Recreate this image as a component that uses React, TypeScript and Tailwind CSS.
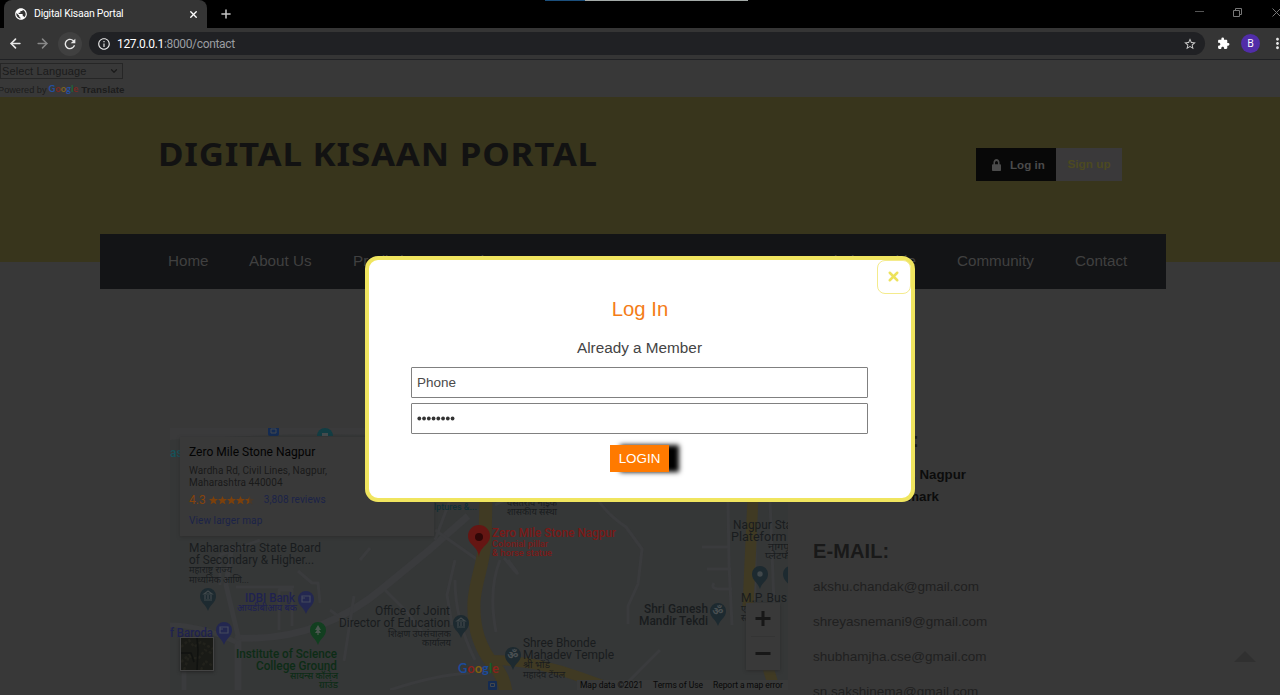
import React from 'react';
import { ArrowLeft, ArrowRight, Plus, X, ChevronDown } from 'lucide-react';
import { MdExtension, MdInfoOutline, MdMoreVert, MdRefresh, MdStarBorder, MdPublic } from 'react-icons/md';
import { FaLock } from 'react-icons/fa';

function BrowserChrome() {
  return (
    <header className="shrink-0 font-['Noto_Sans',sans-serif]">
      <div className="flex h-7 bg-black">
        <div className="ml-1 flex w-[203px] items-center rounded-t-lg bg-[#353535] pl-[10px] pr-2 text-white">
          <MdPublic className="size-[14px] shrink-0" />
          <span className="ml-[6px] flex-1 whitespace-nowrap font-['Roboto',sans-serif] text-[10.5px] tracking-[-0.25px]">Digital Kisaan Portal</span>
          <X className="size-[11px]" strokeWidth={3} />
        </div>
        <Plus className="ml-[12px] mt-[7px] size-[14px] text-[#c4c4c4]" strokeWidth={2.6} />
        <div className="ml-[312px] flex h-px w-[203px]">
          <div className="w-[40px] bg-[#1b4f7c]" />
          <div className="flex-1 bg-[#a4aaa8]" />
        </div>
        <div className="ml-auto flex items-start text-[#777]">
          <div className="mt-[11px] h-px w-[9px] bg-[#555]" />
          <svg className="ml-[29px] mt-2 size-[9px]" viewBox="0 0 9 9" fill="none" stroke="currentColor">
            <path d="M.5 2.5h6v6h-6zM2.5 2.5v-2h6v6h-2" />
          </svg>
          <svg className="ml-[30px] mt-2 h-[9px] w-[8px]" viewBox="0 0 8 9" fill="none" stroke="currentColor">
            <path d="M.5.5l8 8M8.5.5l-8 8" />
          </svg>
        </div>
      </div>
      <div className="flex h-8 items-center overflow-hidden border-b border-[#202124] bg-[#353535] text-[#e8e8e8]">
        <ArrowLeft className="ml-2 size-[15px] shrink-0" strokeWidth={2.6} />
        <ArrowRight className="ml-3 size-[15px] shrink-0 text-[#888]" strokeWidth={2.4} />
        <div className="ml-2 flex size-6 shrink-0 items-center justify-center rounded-full bg-[#404040]">
          <MdRefresh className="size-[16px]" />
        </div>
        <div className="ml-[7px] flex h-[23px] w-[1116px] shrink-0 items-center rounded-full bg-[#202124] pl-2 pr-[8px]">
          <MdInfoOutline className="size-[14px]" />
          <span className="ml-[6px] font-['Roboto',sans-serif] text-[12px] tracking-[-0.34px] text-white">127.0.0.1<span className="text-[#9a9da1]">:8000/contact</span></span>
          <MdStarBorder className="ml-auto size-[14px] text-[#ccc]" />
        </div>
        <MdExtension className="ml-[12px] size-[13px] shrink-0 text-white" />
        <div className="ml-[11px] flex size-[19px] shrink-0 items-center justify-center rounded-full bg-[#512da8] text-[10px] text-white">B</div>
        <MdMoreVert className="ml-[9px] size-[17px] shrink-0" />
      </div>
    </header>
  );
}

function TranslateBar() {
  return (
    <div className="h-[37px] shrink-0 bg-[#383838] pt-[3px]">
      <div className="flex h-4 w-[123px] items-center justify-between border border-[#262626] pl-[1px] pr-[3px] text-[11px] tracking-[0.12px] text-[#1b1b1b]">
        Select Language
        <ChevronDown className="size-[10px]" strokeWidth={3} />
      </div>
      <div className="ml-[-2px] mt-[4px] flex items-center text-[9.2px] leading-[14px] text-[#1c1c1c]">
        Powered by
        <span className="ml-[2px] mt-[-2px] font-['Lato',sans-serif] text-[9.4px] font-bold">
          <span className="text-[#2450a0]">G</span><span className="text-[#7c2822]">o</span><span className="text-[#7d6220]">o</span><span className="text-[#2450a0]">g</span><span className="text-[#206838]">l</span><span className="text-[#7c2822]">e</span>
        </span>
        <b className="ml-[3px] text-[9.8px]">Translate</b>
      </div>
    </div>
  );
}

const nav = [
  ['Home', 'w-[81px]'],
  ['About Us', 'w-[104px]'],
  ['Prediction', 'w-[110px]'],
  ['Schemes', 'w-[328px]'],
  ['Knowledge Guide', 'w-[166px]'],
  ['Community', 'w-[118px]'],
  ['Contact', 'w-[54px]'],
];

function SiteHeader() {
  return (
    <div className="h-[193px] shrink-0 bg-[linear-gradient(#38351c_165px,#383838_165px)]">
      <div className="flex h-[137px]">
        <h1 className="ml-[158px] mt-[35px] w-[440px] origin-left scale-x-[1.09] whitespace-nowrap font-['Noto_Sans',sans-serif] text-[32px] font-bold leading-[44px] tracking-[0.72px] text-[#121212]">DIGITAL KISAAN PORTAL</h1>
        <div className="ml-[378px] mt-[51px] flex h-[33px] text-[11.6px] font-bold">
          <div className="flex w-[80px] items-center bg-[#080808] pl-[16px] text-[#4b4b4b]">
            <FaLock className="h-[12px] w-[9px]" preserveAspectRatio="none" />
            <span className="ml-[9px] whitespace-nowrap">Log in</span>
          </div>
          <div className="flex w-[66px] items-center justify-center bg-[#3a393a] text-[11.8px] text-[#4c4921]">Sign up</div>
        </div>
      </div>
      <nav className="ml-[100px] flex h-[55px] w-[1066px] items-center overflow-hidden bg-[#131416] pl-[68px] text-[15.2px] text-[#404040]">
        {nav.map(([label, width]) => (
          <span key={label} className={width + ' shrink-0 whitespace-nowrap ' + (label === 'Knowledge Guide' ? 'pr-[41px] text-right' : '')}>{label}</span>
        ))}
      </nav>
    </div>
  );
}

type LabelProps = { x: number; y: number; w?: number; size?: number; color?: string; weight?: number; children: string };
function Label({ x, y, w, size = 12, color = '#191c1e', weight = 400, children }: LabelProps) {
  return (
    <text x={x} y={y} fontSize={size} fill={color} fontWeight={color === '#191c1e' ? weight : 500} textLength={w} lengthAdjust="spacingAndGlyphs">{children}</text>
  );
}

function Pin({ x, y, color = '#1d2a30', kind = 'dot' }: { x: number; y: number; color?: string; kind?: string }) {
  return (
    <g transform={`translate(${x} ${y})`}>
      <path d="M0 15C-2 8-8 7-8 0a8 8 0 0 1 16 0c0 7-6 8-8 15z" fill={color} />
      {kind === 'dot' && <circle r="2.7" fill="#41484b" />}
      {kind === 'bank' && <path d="M-4-2L0-5l4 3zM-3-1v4M0-1v4M3-1v4M-4 4h8" fill="none" stroke="#41484b" strokeWidth="1.2" />}
      {kind === 'card' && <path d="M-4-3h8v6h-8zM-4-1h3" fill="none" stroke="#454a5d" strokeWidth="1.2" />}
      {kind === 'tree' && <path d="M0-5l-3 5h2l-2 3h2.4v2h1.2V3H3L1 0h2z" fill="#4b5750" />}
      {kind === 'om' && <text y="4" fontSize="11" textAnchor="middle" fontWeight="700" fill="#4a5052">ॐ</text>}
    </g>
  );
}

function MapDrawing() {
  return (
    <svg className="size-full font-['Roboto','Noto_Sans',sans-serif]" viewBox="170 428 618 262">
      <rect x="170" y="428" width="618" height="262" fill="#353737" />
      <path d="M170 428h200v7q-100-2-200 5z" fill="#3a3a3b" />
      <g fill="none" stroke="#3a3b3d" strokeLinejoin="round">
        <path d="M238 690v-52q45 2 83-13 35-14 62-37l45-37 40-35" strokeWidth="7" />
        <path d="M170 625q30 0 66 17M184 690v-20M239 640l-13-55 6-40" strokeWidth="5" />
        <path d="M236 587h58M279 630v-40h13v36M298 571l14 12h6l2 20M354 596l-10 65M385 590l22 22 15 20M390 690q45-15 80-17M330 610l20 15M450 500l-15 40M435 530l50 35M455 560l-8 35 5 30M360 560l10-12M220 585v-30l40-15M475 660q-20-40-20-80" strokeWidth="3" />
        <path d="M500 560q-12 30-4 72M508 560q15 20 6 10l-10-12M598 500q10 15 28 27l16 22-4 35-10 22v18M728 500l1 65 3 60M702 547h28M707 569h24M714 583q-4 6 6 6h12M755 500v100M770 500l5 130M495 505l18-9M620 690l40-40" strokeWidth="3" />
      </g>
      <g fill="none" stroke="#403a23">
        <path d="M486 497l-1 45c-2 25-10 40-11 60-1 25 5 45 19 62q11 12 13 28" strokeWidth="13" />
        <path d="M490 660q45 0 90 17l45 16" strokeWidth="10" />
        <path d="M753 497l-5 110M768 668l7 22" strokeWidth="11" />
      </g>
      <rect x="268" y="424" width="11" height="12" rx="2" fill="#142b52" />
      <path d="M271 429h5v4h-5z" fill="none" stroke="#43484e" />
      <path d="M317 436a8 8 0 0 1 16 0z" fill="#123d43" />
      <path d="M322 436v-3h6v3z" fill="#454b4d" />
      <Label x={170} y={457} color="#15525a">as</Label>
      <Label x={189} y={552} w={132}>Maharashtra State Board</Label>
      <Label x={189} y={564} w={125}>of Secondary &amp; Higher...</Label>
      <Label x={189} y={573} w={43} size={9}>महाराष्ट्र राज्य</Label>
      <Label x={189} y={583} w={60} size={9}>माध्यमिक आणि...</Label>
      <Label x={245} y={602} w={50} color="#1f2250">IDBI Bank</Label>
      <Label x={237} y={611} w={60} size={9} color="#1f2250">आयडीबीआय बँक</Label>
      <Label x={170} y={637} w={43} color="#1f2250">f Baroda</Label>
      <Label x={236} y={658} w={101} color="#0d2c16">Institute of Science</Label>
      <Label x={256} y={670} w={81} color="#0d2c16">College Ground</Label>
      <Label x={290} y={679} w={48} size={9} color="#0d2c16">सायन्स कॉलेज</Label>
      <Label x={319} y={688} w={19} size={9} color="#0d2c16">ग्राउंड</Label>
      <Label x={375} y={615} w={75}>Office of Joint</Label>
      <Label x={339} y={627} w={111}>Director of Education</Label>
      <Label x={388} y={637} w={63} size={9}>शिक्षण उपसंचालक</Label>
      <Label x={422} y={646} w={29} size={9}>कार्यालय</Label>
      <Label x={434} y={510} w={43} size={9} color="#0f3035">lptures &amp;...</Label>
      <Label x={507} y={506} w={50} size={9}>वसंतराव नाईक</Label>
      <Label x={507} y={515} w={50} size={9}>शासकीय संस्था</Label>
      <Label x={492} y={537} w={124} color="#7a1a17">Zero Mile Stone Nagpur</Label>
      <Label x={492} y={547} w={56} size={9.5} color="#7a1a17">Colonial pillar</Label>
      <Label x={492} y={556} w={60} size={9.5} color="#7a1a17">&amp; horse statue</Label>
      <Label x={733} y={529} w={59}>Nagpur Sta</Label>
      <Label x={731} y={541} w={62}>Plateform I</Label>
      <Label x={768} y={550} w={26} size={9}>नागपूर</Label>
      <Label x={765} y={559} w={34} size={9}>प्लेटफॉर्म</Label>
      <Label x={741} y={602} w={46}>M.P. Bus</Label>
      <Label x={741} y={612} size={9}>ए</Label>
      <Label x={741} y={621} size={9}>स्टेशन</Label>
      <Label x={644} y={613} w={64} weight={500}>Shri Ganesh</Label>
      <Label x={639} y={625} w={69} weight={500}>Mandir Tekdi</Label>
      <Label x={523} y={647} w={73}>Shree Bhonde</Label>
      <Label x={523} y={659} w={91}>Mahadev Temple</Label>
      <Label x={523} y={668} w={27} size={9}>श्री भोंडे</Label>
      <Label x={523} y={678} w={42} size={9}>महादेव टेंपल</Label>
      <Pin x={208} y={596} kind="bank" />
      <Pin x={306} y={599} color="#232750" kind="card" />
      <Pin x={224} y={630} color="#232750" kind="card" />
      <Pin x={318} y={630} color="#123f20" kind="tree" />
      <Pin x={461} y={623} kind="bank" />
      <Pin x={718} y={611} kind="om" />
      <Pin x={513} y={655} kind="om" />
      <Pin x={760} y={574} />
      <Pin x={791} y={574} />
      <path d="M479 557c-1-11-11-12-11-21a11 11 0 0 1 22 0c0 9-10 10-11 21z" fill="#651613" />
      <circle cx="479" cy="537" r="4" fill="#300707" />
      <rect x="488" y="681" width="9" height="9" rx="1" fill="#142b52" />
      <path d="M490.500 683.500h4v3h-4z" fill="none" stroke="#43484e" />
      <text x="458" y="673" fontSize="13" fontWeight="700" textLength="41" lengthAdjust="spacingAndGlyphs" fontFamily="Lato">
        <tspan fill="#1c4a9a">G</tspan><tspan fill="#8a221c">o</tspan><tspan fill="#806010">o</tspan><tspan fill="#1c4a9a">g</tspan><tspan fill="#16602a">l</tspan><tspan fill="#8a221c">e</tspan>
      </text>
      <rect x="577" y="680" width="211" height="10" fill="#393a3a" />
      <g fontSize="8.500" fill="#080808">
        <text x="580" y="688" textLength="63">Map data ©2021</text>
        <text x="653" y="688" textLength="50">Terms of Use</text>
        <text x="713" y="688" textLength="70">Report a map error</text>
      </g>
    </svg>
  );
}

function MapPanel() {
  return (
    <div className="relative h-[262px] w-[618px] shrink-0 overflow-hidden font-['Roboto',sans-serif]">
      <MapDrawing />
      <div className="absolute left-[10px] top-[9px] h-[99px] w-[254px] bg-[#393939] pl-[9px] pt-[8px] shadow-[0_1px_3px_#2e2e2e]">
        <div className="whitespace-nowrap text-[12px] leading-[14px] tracking-[0.02px] text-[#030303]">Zero Mile Stone Nagpur</div>
        <div className="mt-[6px] text-[10px] leading-3 tracking-[0.06px] text-[#1a1a1a]">Wardha Rd, Civil Lines, Nagpur,<br />Maharashtra 440004</div>
        <div className="mt-[4px] flex items-center leading-[14px]">
          <span className="text-[12px] text-[#85430c]">4.3</span>
          <svg className="ml-[3px] h-[9px] w-[46px]" viewBox="0 0 46 9" fill="#7b400c">
            {[0, 9, 18, 27].map((x) => <path key={x} d="M4.500 0l1.300 3h3.200L6.500 5.200l1 3.300-3-2-3 2 1-3.300L0 3h3.200z" transform={`translate(${x})`} />)}
            <path d="M40.500 0v6.500l-3 2 1-3.300L36 3h3.200z" />
            <path d="M40.500 0l1.300 3H45l-2.500 2.200 1 3.300-3-2z" fill="#4a3827" />
          </svg>
          <span className="ml-[9px] text-[10px] tracking-[0.1px] text-[#1b2348]">3,808 reviews</span>
        </div>
        <div className="mt-[7px] text-[10px] leading-[14px] tracking-[0.1px] text-[#1b2348]">View larger map</div>
      </div>
      <div className="absolute left-[10px] top-[209px] h-[34px] w-[34px] border border-[#444] bg-[#191a16] shadow-[0_1px_3px_#222]">
        <svg className="size-full" viewBox="0 0 32 32">
          <path d="M0 9l8-7 5 7 7-5 12 7M3 32l5-14 9 3 7-9 8 4M0 24l9-8M20 32l4-9 8 5" fill="none" stroke="#21211b" strokeWidth="2.500" strokeDasharray="3 2" />
          <path d="M16 0l1 12-1 20M0 15h10l3 9" fill="none" stroke="#101210" strokeWidth="1.500" />
        </svg>
      </div>
      <div className="absolute left-[576px] top-[175px] flex h-[67px] w-[34px] flex-col items-center bg-[#393939] shadow-[0_1px_3px_#2c2c2c]">
        <svg className="size-full" viewBox="0 0 34 67" fill="#171717">
          <path d="M9.500 14h6V8h3v6h6v3h-6v6h-3v-6h-6zM9.500 49h15v3h-15z" />
          <path d="M5 33h24v1H5z" fill="#343434" />
        </svg>
      </div>
    </div>
  );
}

function ContactDetails() {
  return (
    <div className="ml-[25px] w-[300px] text-[#191919]">
      <h2 className="w-[106px] text-right text-[20px] font-bold leading-6">ADDRESS:</h2>
      <p className="mt-[12px] w-[152px] whitespace-nowrap text-right text-[13.3px] font-bold leading-[22px] text-[#0c0c0c]">Zero Mile Stone, Nagpur</p>
      <p className="w-[126px] whitespace-nowrap text-right text-[13.3px] font-bold leading-[22px] text-[#0c0c0c]">Landmark</p>
      <h2 className="mt-[31px] text-[20px] font-bold leading-6 tracking-[0.1px]">E-MAIL:</h2>
      <div className="mt-[6px] text-[13.5px] leading-[35px] text-[#202020]">
        <p>akshu.chandak@gmail.com</p>
        <p>shreyasnemani9@gmail.com</p>
        <p>shubhamjha.cse@gmail.com</p>
        <p>sn.sakshinema@gmail.com</p>
      </div>
    </div>
  );
}

function LoginDialog() {
  return (
    <section className="absolute left-[365px] top-[256px] flex h-[246px] w-[550px] flex-col items-center rounded-[13px] border-4 border-[#f0e55f] bg-white pr-[2px]">
      <button className="absolute right-0 top-0 flex h-[34px] w-[34px] items-center justify-center rounded-lg border border-[#f4eb8c] pb-[2px] pr-[2px] text-[#ede25c]">
        <X className="size-[15px]" strokeWidth={4} />
      </button>
      <h2 className="mt-[37px] pl-[2px] text-[20.3px] leading-6 text-[#f47c16]">Log In</h2>
      <p className="mt-[17px] pl-[1px] text-[15.3px] leading-5 text-[#444]">Already a Member</p>
      <div className="mt-[9px] flex h-[31px] w-[457px] items-center rounded-[1px] border border-[#808080] pl-[5.5px] pt-px text-[13.5px] text-[#4a4a4a]">Phone</div>
      <div className="mt-[5px] flex h-[31px] w-[457px] items-center rounded-[1px] border border-[#808080] pl-[5px] text-[#333]">
        <svg className="h-[5px] w-[40px]" viewBox="0 0 40 5" fill="currentColor">
          {Array.from({ length: 8 }, (_, i) => <circle key={i} cx={2.3 + i * 4.75} cy="2.500" r="1.900" />)}
        </svg>
      </div>
      <button className="mt-[11px] h-[27px] w-[59px] bg-[#ff7a00] pl-px pt-px text-[13.4px] text-white shadow-[10px_0_5px_#000]">LOGIN</button>
    </section>
  );
}

export default function App() {
  return (
    <div className="relative flex h-[695px] w-[1280px] flex-col overflow-hidden bg-[#383838] font-['Liberation_Sans',Arial,sans-serif]">
      <BrowserChrome />
      <TranslateBar />
      <SiteHeader />
      <main className="flex pl-[170px] pt-[138px]">
        <MapPanel />
        <ContactDetails />
      </main>
      <svg className="absolute left-[1233px] top-[650px] h-3 w-6" viewBox="0 0 24 12" fill="#303030"><path d="M12 1l11 11H1z" /></svg>
      <LoginDialog />
    </div>
  );
}
